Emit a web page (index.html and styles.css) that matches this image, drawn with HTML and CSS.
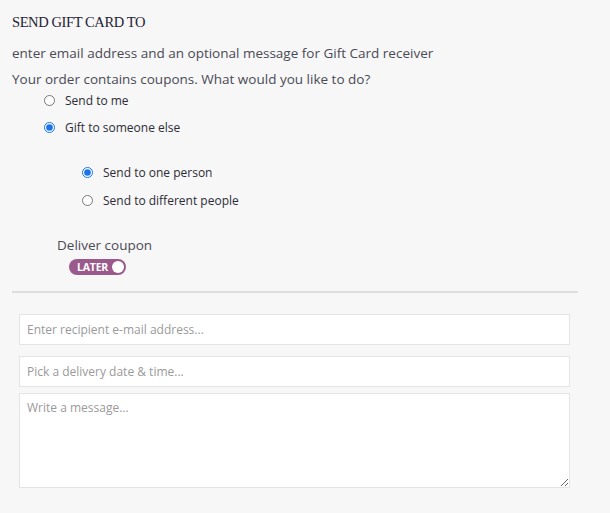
FILE: index.html
```html
<!DOCTYPE html>
<html>
<head>
<meta charset="utf-8">
<link rel="stylesheet" href="styles.css">
</head>
<body>
<div class="page">
  <h2 class="title">SEND GIFT CARD TO</h2>
  <p class="intro">enter email address and an optional message for Gift Card receiver</p>
  <p class="question">Your order contains coupons. What would you like to do?</p>
  <div class="options">
    <label class="opt"><input type="radio" name="who"><span>Send to me</span></label>
    <label class="opt"><input type="radio" name="who" checked><span>Gift to someone else</span></label>
  </div>
  <div class="suboptions">
    <label class="opt"><input type="radio" name="many" checked><span>Send to one person</span></label>
    <label class="opt"><input type="radio" name="many"><span>Send to different people</span></label>
  </div>
  <div class="deliver">
    <div class="deliver-label">Deliver coupon</div>
    <div class="toggle"><span class="toggle-text">LATER</span><span class="knob"></span></div>
  </div>
  <hr class="divider">
  <div class="fields">
    <input class="field" type="text" placeholder="Enter recipient e-mail address...">
    <input class="field field-date" type="text" placeholder="Pick a delivery date &amp; time...">
    <textarea class="field area" placeholder="Write a message..."></textarea>
  </div>
</div>
</body>
</html>
```
FILE: styles.css
```css
html, body {
  margin: 0;
  padding: 0;
  background: #f7f7f7;
}
body {
  font-family: "Open Sans", "DejaVu Sans", sans-serif;
  color: #4a4a55;
}
.page {
  padding: 12px 32px 0 12px;
}
.title {
  margin: 0;
  font-family: "Liberation Serif", "DejaVu Serif", serif;
  font-weight: normal;
  font-size: 14.5px;
  line-height: 20px;
  color: #1f2233;
  letter-spacing: -0.4px;
}
.intro, .question {
  margin: 0;
  font-size: 13.5px;
  line-height: 20px;
  color: #4a4a55;
}
.intro { margin-top: 11px; }
.question { margin-top: 6px; }
.options {
  display: flex;
  flex-direction: column;
  gap: 10px;
  margin-top: 3px;
  padding-left: 32px;
}
.opt {
  display: flex;
  align-items: center;
  gap: 10px;
  height: 17px;
  font-size: 12px;
  font-weight: 500;
  color: #2c2c36;
}
.opt input {
  margin: 0;
  width: 11px;
  height: 11px;
  accent-color: #1a73e8;
}
.suboptions {
  display: flex;
  flex-direction: column;
  gap: 11px;
  margin-top: 28px;
  padding-left: 70px;
}
.deliver {
  margin-top: 27px;
  padding-left: 45px;
}
.deliver-label {
  font-size: 13.5px;
  line-height: 18px;
  color: #4a4a55;
}
.toggle {
  display: inline-flex;
  align-items: center;
  gap: 4px;
  margin: 0 0 0 12px;
  height: 16px;
  padding: 0 2px 0 8px;
  border-radius: 8px;
  background: #9a5a8b;
}
.toggle-text {
  color: #fff;
  font-size: 10.5px;
  font-weight: 700;
  letter-spacing: -0.2px;
}
.knob {
  width: 12px;
  height: 12px;
  border-radius: 50%;
  background: #fff;
}
.divider {
  margin: 15px 0 0 0;
  border: 0;
  border-top: 2px solid #dedede;
}
.fields {
  display: flex;
  flex-direction: column;
  padding: 0 8px 0 7px;
  margin-top: 21px;
}
.field {
  box-sizing: border-box;
  height: 31px;
  margin: 0;
  padding: 0 7px;
  border: 1px solid #e4e4e4;
  background: #fff;
  font-family: "Open Sans", sans-serif;
  font-size: 12px;
  color: #555;
  outline: none;
}
.field::placeholder { color: #9a9a9a; }
.field-date { margin-top: 11px; }
.area {
  margin-top: 6px;
  height: 95px;
  padding: 5px 7px;
  resize: vertical;
}
```
